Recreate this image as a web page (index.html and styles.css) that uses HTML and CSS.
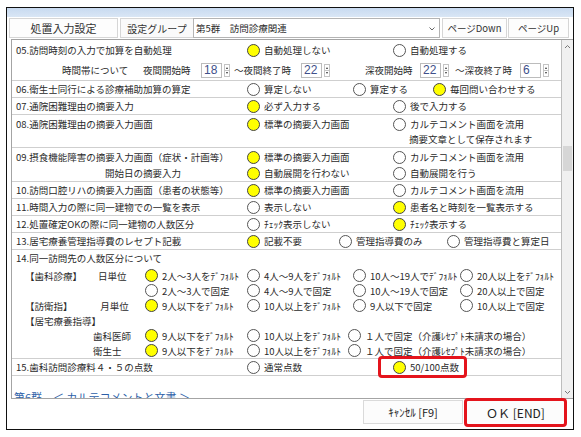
FILE: index.html
```html
<!DOCTYPE html>
<html>
<head>
    <meta charset="utf-8">
    <title>処置入力設定</title>
    <link rel="stylesheet" href="styles.css">
</head>
<body>

<div class="window">
    <div class="titlebar"></div>

    <div class="toolbar">
        <div class="tbtn big">処置入力設定</div>
        <div class="glabel">設定グループ</div>
        <div class="combo">
            <span>第5群　訪問診療関連</span>
            <svg class="drop" width="6" height="4" viewBox="0 0 6 4"><polyline points="0.5,0.5 3,3 5.5,0.5" fill="none" stroke="#666" stroke-width="1"/></svg>
        </div>
        <div class="tbtn pg-down">ページDown</div>
        <div class="tbtn pg-up">ページUp</div>
    </div>

    <div class="frame">
        <div class="list">

            <div class="sect s05">
                <div class="line">
                    <span class="lbl">05.訪問時刻の入力で加算を自動処理</span>
                    <span class="opt wa"><i class="rb on"></i>自動処理しない</span>
                    <span class="opt"><i class="rb"></i>自動処理する</span>
                </div>
                <div class="line times">
                    <span class="tz">時間帯について</span>
                    <span class="tk k1">夜間開始時</span>
                    <span class="spin">18</span><span class="spinbtn g1"></span>
                    <span class="tk k2">～夜間終了時</span>
                    <span class="spin">22</span><span class="spinbtn g2"></span>
                    <span class="tk k3">深夜開始時</span>
                    <span class="spin">22</span><span class="spinbtn g3"></span>
                    <span class="tk k4">～深夜終了時</span>
                    <span class="spin">6</span><span class="spinbtn"></span>
                </div>
            </div>

            <div class="sect">
                <div class="line">
                    <span class="lbl">06.衛生士同行による診療補助加算の算定</span>
                    <span class="opt w106"><i class="rb"></i>算定しない</span>
                    <span class="opt w80"><i class="rb"></i>算定する</span>
                    <span class="opt"><i class="rb on"></i>毎回問い合わせする</span>
                </div>
            </div>

            <div class="sect">
                <div class="line">
                    <span class="lbl">07.通院困難理由の摘要入力</span>
                    <span class="opt wa"><i class="rb on"></i>必ず入力する</span>
                    <span class="opt"><i class="rb"></i>後で入力する</span>
                </div>
            </div>

            <div class="sect s08">
                <div class="line">
                    <span class="lbl">08.通院困難理由の摘要入力画面</span>
                    <span class="opt wa"><i class="rb on"></i>標準の摘要入力画面</span>
                    <span class="opt"><i class="rb"></i>カルテコメント画面を流用</span>
                </div>
                <div class="line sub">
                    <span class="note">摘要文章として保存されます</span>
                </div>
            </div>

            <div class="sect s09">
                <div class="line">
                    <span class="lbl">09.摂食機能障害の摘要入力画面（症状・計画等）</span>
                    <span class="opt wa"><i class="rb on"></i>標準の摘要入力画面</span>
                    <span class="opt"><i class="rb"></i>カルテコメント画面を流用</span>
                </div>
                <div class="line">
                    <span class="lbl indent">開始日の摘要入力</span>
                    <span class="opt wa"><i class="rb on"></i>自動展開を行わない</span>
                    <span class="opt"><i class="rb"></i>自動展開を行う</span>
                </div>
            </div>

            <div class="sect">
                <div class="line">
                    <span class="lbl">10.訪問口腔リハの摘要入力画面（患者の状態等）</span>
                    <span class="opt wa"><i class="rb on"></i>標準の摘要入力画面</span>
                    <span class="opt"><i class="rb"></i>カルテコメント画面を流用</span>
                </div>
            </div>

            <div class="sect">
                <div class="line">
                    <span class="lbl">11.時間入力の際に同一建物での一覧を表示</span>
                    <span class="opt wa"><i class="rb"></i>表示しない</span>
                    <span class="opt"><i class="rb on"></i>患者名と時刻を一覧表示する</span>
                </div>
            </div>

            <div class="sect">
                <div class="line">
                    <span class="lbl">12.処置確定OKの際に同一建物の人数区分</span>
                    <span class="opt wa"><i class="rb"></i>ﾁｪｯｸ表示しない</span>
                    <span class="opt"><i class="rb on"></i>ﾁｪｯｸ表示する</span>
                </div>
            </div>

            <div class="sect">
                <div class="line">
                    <span class="lbl">13.居宅療養管理指導費のレセプト記載</span>
                    <span class="opt w92"><i class="rb on"></i>記載不要</span>
                    <span class="opt w108"><i class="rb"></i>管理指導費のみ</span>
                    <span class="opt"><i class="rb"></i>管理指導費と算定日</span>
                </div>
            </div>

            <div class="sect s14">
                <div class="line">
                    <span class="lbl">14.同一訪問先の人数区分について</span>
                </div>
                <div class="row14">
                    <span class="lbl2"><span class="bk">【歯科診療】</span>日単位</span>
                    <span class="opt g1"><i class="rb on"></i>2人～3人をﾃﾞﾌｫﾙﾄ</span>
                    <span class="opt g2"><i class="rb"></i>4人～9人をﾃﾞﾌｫﾙﾄ</span>
                    <span class="opt g3"><i class="rb"></i>10人～19人でﾃﾞﾌｫﾙﾄ</span>
                    <span class="opt"><i class="rb"></i>20人以上をﾃﾞﾌｫﾙﾄ</span>
                </div>
                <div class="row14">
                    <span class="lbl2"></span>
                    <span class="opt g1"><i class="rb"></i>2人～3人で固定</span>
                    <span class="opt g2"><i class="rb"></i>4人～9人で固定</span>
                    <span class="opt g3"><i class="rb"></i>10人～19人で固定</span>
                    <span class="opt"><i class="rb"></i>20人以上で固定</span>
                </div>
                <div class="row14">
                    <span class="lbl2"><span class="bk">【訪衛指】</span>&nbsp;月単位</span>
                    <span class="opt g1"><i class="rb on"></i>9人以下をﾃﾞﾌｫﾙﾄ</span>
                    <span class="opt g2"><i class="rb"></i>10人以上をﾃﾞﾌｫﾙﾄ</span>
                    <span class="opt g3"><i class="rb"></i>9人以下で固定</span>
                    <span class="opt"><i class="rb"></i>10人以上で固定</span>
                </div>
                <div class="row14">
                    <span class="lbl2"><span class="bk">【居宅療養指導】</span></span>
                </div>
                <div class="row14">
                    <span class="lbl2 who">歯科医師</span>
                    <span class="opt g1"><i class="rb on"></i>9人以下をﾃﾞﾌｫﾙﾄ</span>
                    <span class="opt g2x"><i class="rb"></i>10人以上をﾃﾞﾌｫﾙﾄ</span>
                    <span class="opt"><i class="rb"></i>１人で固定（介護ﾚｾﾌﾟﾄ未請求の場合）</span>
                </div>
                <div class="row14">
                    <span class="lbl2 who">衛生士</span>
                    <span class="opt g1"><i class="rb on"></i>9人以下をﾃﾞﾌｫﾙﾄ</span>
                    <span class="opt g2x"><i class="rb"></i>10人以上をﾃﾞﾌｫﾙﾄ</span>
                    <span class="opt"><i class="rb"></i>１人で固定（介護ﾚｾﾌﾟﾄ未請求の場合）</span>
                </div>
            </div>

            <div class="sect">
                <div class="line">
                    <span class="lbl">15.歯科訪問診療料４・５の点数</span>
                    <span class="opt wa"><i class="rb"></i>通常点数</span>
                    <span class="opt marked"><i class="rb on"></i>50/100点数<b class="mark"></b></span>
                </div>
            </div>

            <div class="next-group">第6群　＜ カルテコメントと文書 ＞</div>
        </div>

        <div class="vscroll">
            <svg class="arrow" width="7" height="5" viewBox="0 0 7 5"><polyline points="1,4 3.5,1.5 6,4" fill="none" stroke="#777" stroke-width="1"/></svg>
            <div class="thumb"></div>
            <svg class="arrow down" width="7" height="5" viewBox="0 0 7 5"><polyline points="1,1 3.5,3.5 6,1" fill="none" stroke="#777" stroke-width="1"/></svg>
        </div>
    </div>

    <div class="footer">
        <div class="fbtn cancel">ｷｬﾝｾﾙ [F9]</div>
        <div class="fbtn ok">ＯＫ [END]<b class="mark"></b></div>
    </div>
</div>

</body>
</html>
```

FILE: styles.css
```css
* { box-sizing: border-box; }
body { margin: 0; background: #fff; font-family: "Noto Sans CJK JP", "Noto Sans", sans-serif; font-size: 9.5px; color: #2a2a2a; }

.window { margin: 7px 0 0 6px; width: 568px; height: 423px; border: 1px solid #111; display: flex; flex-direction: column; background: #fff; }
.titlebar { height: 9px; background: linear-gradient(#c8daf0, #d9e6f5); }

/* top toolbar */
.toolbar { height: 22px; display: flex; padding: 1px 0 0 2px; }
.tbtn, .glabel, .combo { height: 20px; display: flex; align-items: center; justify-content: center; }
.tbtn { border: 1px solid #d6d6d6; background: #fdfdfd; color: #333; }
.tbtn.big { width: 109px; font-size: 11px; }
.glabel { width: 73px; margin-left: 2px; border: 1px solid #d6d6d6; border-right: none; background: #fafafa; font-size: 10px; color: #333; }
.combo { width: 247px; border: 1px solid #b4b4b4; background: #fff; justify-content: space-between; padding: 0 4px 0 2px; font-size: 9.5px; }
.combo .drop { margin-top: 1px; }
.pg-down { width: 65px; margin-left: 2px; }
.pg-up { width: 61px; margin-left: 1px; }

/* scroll area */
.frame { height: 360px; margin-left: 4px; display: flex; border: 1px solid #a4a4a4; border-right: none; }
.list { width: 550px; overflow: hidden; border-right: 1px solid #bdbdbd; }
.vscroll { width: 11px; background: #f0f0f0; display: flex; flex-direction: column; align-items: center; padding-top: 4px; }
.vscroll .thumb { width: 9px; height: 25px; margin-top: 97px; background: #d6d6d6; }
.vscroll .down { margin-top: auto; margin-bottom: 3px; }

.sect { border-bottom: 1px solid #cfcfcf; }
.line { height: 16px; display: flex; align-items: center; }
.lbl { width: 235px; padding-left: 4px; white-space: nowrap; }
.lbl.indent { padding-left: 93px; }
.opt { display: flex; align-items: center; white-space: nowrap; }
.wa { width: 146px; }
.w106 { width: 106px; }
.w80 { width: 80px; }
.w92 { width: 92px; }
.w108 { width: 108px; }

.rb { display: inline-block; width: 13px; height: 13px; border: 1px solid #555; border-radius: 50%; background: #fff; margin-right: 4px; flex: none; }
.rb.on { background: #ffff00; border-color: #444; }

.s05 { padding: 2px 0 2px; }
.s05 .line + .line { margin-top: 4px; }
.times { padding-left: 50px; }
.tz { width: 81px; }
.k1 { width: 58px; }
.k2 { width: 67px; }
.k3 { width: 55px; }
.k4 { width: 65px; }
.spin { width: 21px; height: 15px; border: 1px solid #bcbcbc; font-family: "Liberation Sans", sans-serif; font-size: 12px; line-height: 13px; color: #40508a; padding-left: 2px; }
.spinbtn { width: 6px; height: 13px; margin-left: 2px; border: 1px solid #c4c4c4; background:
    linear-gradient(#c4c4c4, #c4c4c4) center 5px / 4px 1px no-repeat; position: relative; }
.spinbtn::before, .spinbtn::after { content: ""; position: absolute; left: 1px; border-left: 1px solid transparent; border-right: 1px solid transparent; }
.spinbtn::before { top: 2px; border-bottom: 2px solid #333; }
.spinbtn::after { bottom: 2px; border-top: 2px solid #333; }
.spinbtn.g1 { margin-right: 4px; }
.spinbtn.g2 { margin-right: 35px; }
.spinbtn.g3 { margin-right: 6px; }

.s08 { padding: 1px 0 1px; }
.line.sub { height: 14px; }
.note { padding-left: 397px; }
.s09 { padding: 1px 0 0; }

.row14 { height: 15px; display: flex; align-items: center; }
.s14 .line + .row14 { margin-top: 2px; }
.lbl2 { width: 133px; padding-left: 13px; display: flex; white-space: nowrap; }
.lbl2 .bk { width: 73px; }
.lbl2.who { padding-left: 81px; }
.opt.g1 { width: 102px; }
.opt.g2 { width: 106px; }
.opt.g2x { width: 101px; }
.opt.g3 { width: 107px; }

.marked { position: relative; }
.mark { position: absolute; left: -15px; top: -4px; right: -8px; bottom: -4px; border: 3px solid #e4141c; border-radius: 4px; }

.next-group { margin-top: 13px; padding-left: 2px; font-size: 11px; color: #2d5fa8; white-space: nowrap; }

/* bottom buttons */
.footer { height: 30px; display: flex; justify-content: flex-end; padding: 1px 8px 0 0; }
.fbtn { display: flex; align-items: center; justify-content: center; border: 1px solid #dadada; background: #fcfcfc; color: #222; }
.cancel { width: 100px; height: 24px; font-size: 11px; }
.ok { width: 99px; height: 25px; margin-left: 3px; font-size: 12px; position: relative; }
.ok .mark { left: -3px; top: -3px; right: -3px; bottom: -3px; }
```
